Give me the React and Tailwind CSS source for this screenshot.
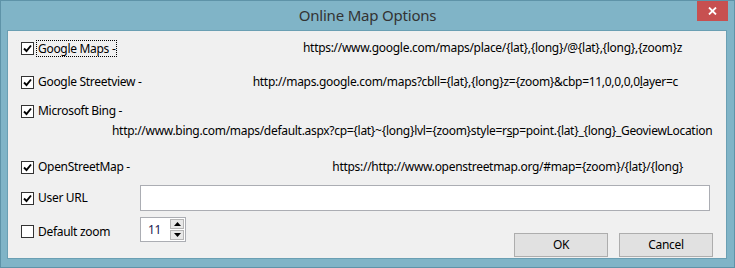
import React from 'react';

const font = { fontFamily: '"Segoe UI", "Noto Sans", sans-serif' };

function Check({ checked }) {
  return (
    <div className="w-[13px] h-[13px] shrink-0 border border-[#333] bg-white flex items-center justify-center">
      {checked && (
        <svg width="9" height="9" viewBox="0 0 9 9">
          <path d="M1 4.5 L3.5 7 L8 1.5" fill="none" stroke="#000" strokeWidth="1.9" />
        </svg>
      )}
    </div>
  );
}

function Button({ children }) {
  return (
    <div className="w-[94px] h-[24px] border border-[#adadad] bg-[#e1e1e1] flex items-center justify-center text-[12px] text-black">
      {children}
    </div>
  );
}

export default function App() {
  return (
    <div className="w-[735px] h-[268px] bg-[#80b4c7] border border-[#5e93a8] flex flex-col" style={font}>
      <div className="h-[29px] relative flex items-center justify-center">
        <span className="text-[15px] text-[#333] tracking-[-0.2px] pb-[1px]">Online Map Options</span>
        <div className="absolute top-0 right-[6px] w-[31px] h-[20px] bg-[#c75050] flex items-center justify-center">
          <svg width="9" height="8" viewBox="0 0 9 8">
            <path d="M1 0.5 L8 7.5 M8 0.5 L1 7.5" stroke="#fff" strokeWidth="1.8" />
          </svg>
        </div>
      </div>

      <div className="ml-[6px] mr-[7px] h-[229px] bg-[#f0f0f0] border border-[#6a9fb3] flex flex-col pt-[7px] text-[12px] tracking-[-0.3px] text-black">
        <div className="h-[20px] flex items-center pl-[13px] pr-[44px]">
          <Check checked />
          <span className="ml-[2px] px-[1px] border border-dotted border-black leading-[15px]">Google Maps -</span>
          <span className="ml-auto">https://www.google.com/maps/place/{'{lat}'},{'{long}'}/@{'{lat}'},{'{long}'},{'{zoom}'}z</span>
        </div>

        <div className="h-[20px] mt-[14px] flex items-center pl-[13px] pr-[48px]">
          <Check checked />
          <span className="ml-[4px]">Google Streetview -</span>
          <span className="ml-auto">
            http://maps.google.com/maps?cbll={'{lat}'},{'{long}'}z={'{zoom}'}&amp;cbp=11,0,0,0,0<span className="underline">l</span>ayer=c
          </span>
        </div>

        <div className="h-[20px] mt-[9px] flex items-center pl-[13px]">
          <Check checked />
          <span className="ml-[4px]">Microsoft Bing -</span>
        </div>
        <div className="h-[20px] flex items-center pl-[104px]">
          <span className="whitespace-nowrap">
            http://www.bing.com/maps/default.aspx?cp={'{lat}'}~{'{long}'}lvl={'{zoom}'}style=r<span className="underline">s</span>p=point.{'{lat}'}_{'{long}'}_GeoviewLocation
          </span>
        </div>

        <div className="h-[20px] mt-[16px] flex items-center pl-[13px] pr-[43px]">
          <Check checked />
          <span className="ml-[4px]">OpenStreetMap -</span>
          <span className="ml-auto">https://http://www.openstreetmap.org/#map={'{zoom}'}/{'{lat}'}/{'{long}'}</span>
        </div>

        <div className="h-[26px] mt-[8px] flex items-center pl-[13px] pr-[16px]">
          <div className="w-[119px] flex items-center">
            <Check checked />
            <span className="ml-[4px]">User URL</span>
          </div>
          <div className="flex-1 h-[26px] bg-white border border-[#abadb3]" />
        </div>

        <div className="mt-[6px] flex items-start pl-[13px] pr-[13px]">
          <div className="w-[119px] h-[25px] flex items-center pt-[4px]">
            <Check />
            <span className="ml-[4px]">Default zoom</span>
          </div>
          <div className="w-[46px] h-[25px] bg-white border border-[#abadb3] flex items-center">
            <span className="ml-[7px] flex-1 text-[#1a1a50]">11</span>
            <div className="flex flex-col gap-[1px] mr-[1px]">
              <div className="w-[14px] h-[10px] bg-[#e8e8e8] border border-[#b5b5b5] flex items-center justify-center">
                <svg width="7" height="4" viewBox="0 0 7 4"><path d="M0 4 L3.5 0 L7 4 Z" fill="#000" /></svg>
              </div>
              <div className="w-[14px] h-[10px] bg-[#e8e8e8] border border-[#b5b5b5] flex items-center justify-center">
                <svg width="7" height="4" viewBox="0 0 7 4"><path d="M0 0 L7 0 L3.5 4 Z" fill="#000" /></svg>
              </div>
            </div>
          </div>
          <div className="ml-auto mt-[16px] flex gap-[11px]">
            <Button>OK</Button>
            <Button>Cancel</Button>
          </div>
        </div>
      </div>
    </div>
  );
}
